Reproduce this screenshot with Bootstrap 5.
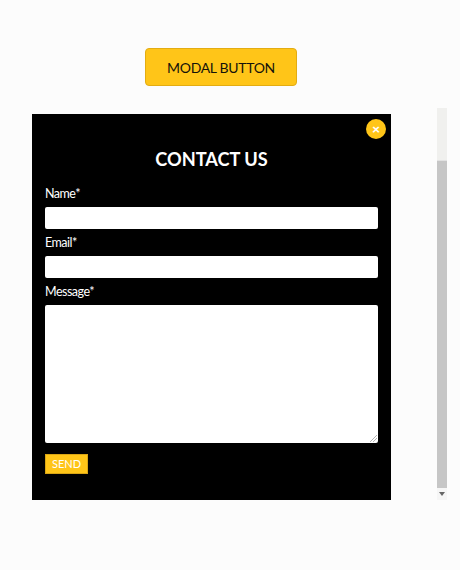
<!DOCTYPE html>
<html lang="en">
<head>
<meta charset="utf-8">
<title>Contact</title>
<link href="https://cdn.jsdelivr.net/npm/bootstrap@5.3.0/dist/css/bootstrap.min.css" rel="stylesheet">
<style>
html, body { height: 100%; overflow: hidden; }
body { background: #fcfcfc; font-family: Lato, "Liberation Sans", sans-serif; color: #fff; }
.page-wrap { padding-top: 48px; }
.modal-btn { width: 152px; height: 38px; margin-left: 145px; background: #ffc518; border: 1px solid #e3ac12; border-radius: 4px; color: #14120a; font-size: 14px; letter-spacing: -0.33px; padding: 0; display: block; }
.stage { margin-top: 28px; padding-left: 32px; gap: 46px; }
.contact-box { position: relative; width: 359px; height: 386px; background: #000; padding: 35px 13px 0; }
.close-dot { position: absolute; top: 5px; right: 5px; width: 20px; height: 20px; border-radius: 50%; background: #ffc518; border: 0; padding: 0; color: #fff; font-size: 14px; font-weight: 900; line-height: 20px; text-align: center; }
.contact-title { font-family: Lato, "Liberation Sans", sans-serif; font-size: 18.2px; font-weight: 700; line-height: 20px; margin: 0 0 18px; text-align: center; color: #fff; }
.field-label { display: block; font-size: 12.5px; letter-spacing: -0.5px; line-height: 14px; margin-bottom: 6px; color: #fff; }
.field-input { display: block; width: 100%; height: 22px; background: #fff; border: 0; border-radius: 2px; margin-bottom: 7px; padding: 0 6px; }
.field-area { display: block; width: 100%; height: 138px; background: #fff; border: 0; border-radius: 2px; padding: 4px 6px; margin-bottom: 11px; resize: vertical; }
.field-area::-webkit-resizer { background: linear-gradient(135deg, transparent 55%, #b5b5b5 55%, #b5b5b5 62%, transparent 62%, transparent 70%, #b5b5b5 70%, #b5b5b5 77%, transparent 77%) no-repeat right 1px bottom 1px / 8px 8px; }
.send-btn { width: 43px; height: 20px; background: #ffc518; border: 1px solid #d9a514; border-radius: 0; color: #fff; font-size: 11px; padding: 0; line-height: 16px; display: block; }
.fake-scroll { width: 10px; height: 392px; margin-top: -6px; background: #f0f0ee; }
.fake-thumb { margin-top: 52px; height: 328px; background: #c6c6c6; border-top: 1px solid #e2e2e2; }
.fake-down { height: 12px; background: #f6f6f6; display: flex; align-items: center; justify-content: center; }
</style>
</head>
<body>
<div class="page-wrap">
  <button type="button" class="btn modal-btn text-uppercase">Modal button</button>
  <div class="d-flex align-items-start stage">
    <div class="contact-box">
      <button type="button" class="close-dot" aria-label="Close">×</button>
      <h2 class="contact-title">CONTACT US</h2>
      <form>
        <label class="field-label" for="n">Name*</label>
        <input class="field-input" id="n" type="text">
        <label class="field-label" for="e">Email*</label>
        <input class="field-input" id="e" type="email">
        <label class="field-label" for="m">Message*</label>
        <textarea class="field-area" id="m"></textarea>
        <button type="button" class="btn send-btn">SEND</button>
      </form>
    </div>
    <div class="fake-scroll d-flex flex-column">
      <div class="fake-thumb"></div>
      <div class="fake-down">
        <svg width="6" height="4" viewBox="0 0 6 4"><path d="M0 0h6L3 4z" fill="#666"/></svg>
      </div>
    </div>
  </div>
</div>
</body>
</html>
